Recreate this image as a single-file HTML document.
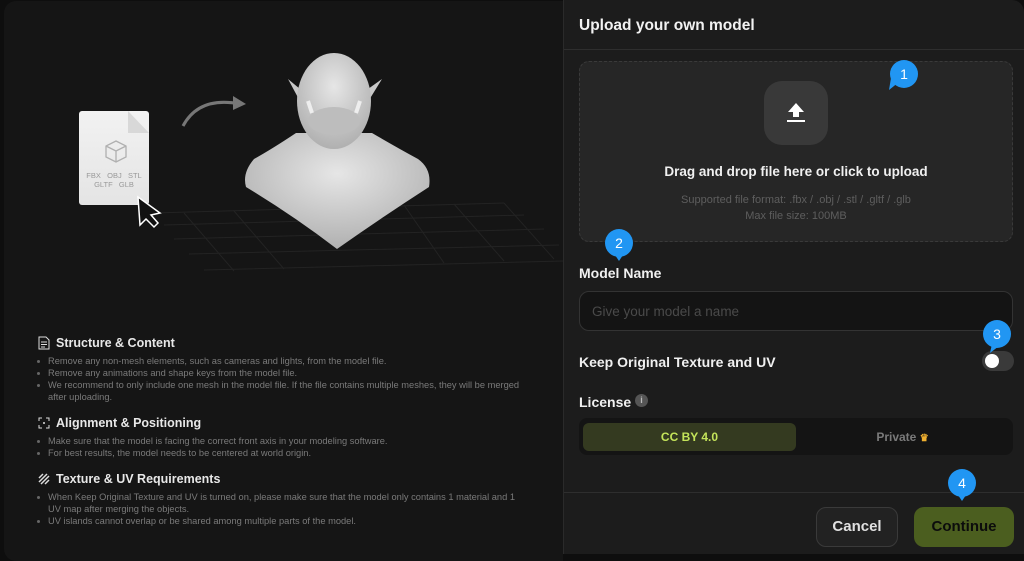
<!DOCTYPE html>
<html><head><meta charset="utf-8"><style>
*{margin:0;padding:0;box-sizing:border-box}
body{width:1024px;height:554px;background:#0e0e0e;font-family:"Liberation Sans",sans-serif;position:relative;overflow:hidden}
.left{position:absolute;left:4px;top:1px;width:559px;height:560px;background:#151515;border-radius:12px 0 0 12px}
.right{position:absolute;left:563px;top:0;width:461px;height:554px;background:#1c1c1c;border-left:1px solid #2a2a2a;border-radius:0 12px 0 0}
.abs{position:absolute}
h3{position:absolute;font-size:12.5px;color:#e8e8e8;font-weight:bold;left:52px}
ul{position:absolute;left:44px;width:480px;font-size:9.3px;line-height:12px;color:#7a7a7a;list-style:none}
ul li{position:relative}
ul li:before{content:"";position:absolute;left:-11px;top:5px;width:3px;height:3px;border-radius:50%;background:#666}
.badge{position:absolute;width:28px;height:28px;border-radius:50%;background:#2196f3;color:#fff;font-size:14px;text-align:center;line-height:28px}
.lbl{position:absolute;left:15px;font-size:14px;font-weight:bold;color:#f0f0f0}
</style></head><body>
<div class="left">
<svg class="abs" style="left:0;top:0" width="559" height="320">
<defs><radialGradient id="g" cx="50%" cy="35%" r="65%"><stop offset="0" stop-color="#e6e6e6"/><stop offset="1" stop-color="#b0b0b0"/></radialGradient>
<linearGradient id="f" x1="0" y1="0" x2="0" y2="1"><stop offset="0" stop-color="#f2f2f2"/><stop offset="1" stop-color="#e4e4e4"/></linearGradient></defs>
<g stroke="#232323" stroke-width="1" fill="none">
<path d="M150 212 L500 202 M160 224 L520 214 M170 238 L540 228 M185 253 L555 244 M200 269 L559 260"/>
<path d="M180 212 L230 270 M230 210 L280 268 M400 204 L440 262 M450 203 L500 260 M500 202 L550 258"/>
</g>
<rect x="75" y="110" width="70" height="94" rx="3" fill="url(#f)"/>
<path d="M124 110 L145 132 L124 132Z" fill="#d8d8d8"/>
<path d="M112 140 l10 5 v11 l-10 5 l-10 -5 v-11z M102 145 l10 5 l10 -5 M112 150 v11" stroke="#b0b0b0" fill="none" stroke-width="1.3"/>
<text x="110" y="177" font-size="7.5" fill="#999" text-anchor="middle" font-family="Liberation Sans" xml:space="preserve">FBX   OBJ   STL</text>
<text x="110" y="186" font-size="7.5" fill="#999" text-anchor="middle" font-family="Liberation Sans" xml:space="preserve">GLTF   GLB</text>
<path d="M134 196 L136 224 L142 218 L150 226 L154 222 L147 214 L156 212Z" fill="#111" stroke="#fff" stroke-width="1.5"/>
<path d="M179 125 Q195 95 236 103" stroke="#777" stroke-width="3" fill="none"/>
<path d="M229 95 L242 103 L229 109Z" fill="#777"/>
<path d="M292 132 Q268 148 250 158 Q238 172 242 186 Q290 215 333 248 Q380 215 425 186 Q428 168 414 158 Q392 146 368 132Z" fill="url(#g)"/>
<path d="M296 88 L284 78 L298 104Z M364 88 L378 78 L362 104Z" fill="#c8c8c8"/>
<ellipse cx="330" cy="100" rx="37" ry="48" fill="url(#g)"/>
<ellipse cx="330" cy="120" rx="26" ry="14" fill="#bdbdbd"/>
<path d="M308 112 l-4 -12 M352 112 l4 -12" stroke="#eee" stroke-width="4"/>
</svg>
<svg class="abs" style="left:34px;top:335px" width="12" height="14"><path d="M1 1h7l3 3v9H1z M3 6h6 M3 8.5h6 M3 11h4" stroke="#ddd" fill="none"/></svg>
<h3 style="top:335px">Structure &amp; Content</h3>
<ul style="top:354px"><li>Remove any non-mesh elements, such as cameras and lights, from the model file.</li><li>Remove any animations and shape keys from the model file.</li><li>We recommend to only include one mesh in the model file. If the file contains multiple meshes, they will be merged after uploading.</li></ul>
<svg class="abs" style="left:34px;top:416px" width="12" height="12"><path d="M1 4V1h3 M8 1h3v3 M11 8v3H8 M4 11H1V8" stroke="#ddd" fill="none"/><circle cx="6" cy="6" r="1" fill="#ddd"/></svg>
<h3 style="top:415px">Alignment &amp; Positioning</h3>
<ul style="top:434px"><li>Make sure that the model is facing the correct front axis in your modeling software.</li><li>For best results, the model needs to be centered at world origin.</li></ul>
<svg class="abs" style="left:34px;top:472px" width="12" height="12"><path d="M1 5L5 1 M1 9L9 1 M3 11L11 3 M7 11L11 7" stroke="#ddd" stroke-width="1.5"/></svg>
<h3 style="top:471px">Texture &amp; UV Requirements</h3>
<ul style="top:490px"><li>When Keep Original Texture and UV is turned on, please make sure that the model only contains 1 material and 1 UV map after merging the objects.</li><li>UV islands cannot overlap or be shared among multiple parts of the model.</li></ul>
</div>
<div class="right">
<div class="abs" style="left:15px;top:17px;font-size:15.5px;font-weight:bold;color:#f2f2f2">Upload your own model</div>
<div class="abs" style="left:0;top:49px;width:461px;height:1px;background:#2e2e2e"></div>
<div class="abs" style="left:15px;top:61px;width:434px;height:181px;background:#262626;border:1px dashed #3a3a3a;border-radius:10px"></div>
<div class="abs" style="left:200px;top:81px;width:64px;height:64px;background:#393939;border-radius:18px"></div>
<svg class="abs" style="left:222px;top:102px" width="20" height="22"><path d="M10 1L2 10h5v5h6v-5h5z" fill="#fff"/><rect x="1" y="18" width="18" height="2" fill="#fff"/></svg>
<div class="abs" style="left:15px;top:164px;width:434px;text-align:center;font-size:13.5px;font-weight:bold;color:#f0f0f0">Drag and drop file here or click to upload</div>
<div class="abs" style="left:15px;top:192px;width:434px;text-align:center;font-size:11px;line-height:16px;color:#5e5e5e">Supported file format: .fbx / .obj / .stl / .gltf / .glb<br>Max file size: 100MB</div>
<div class="lbl" style="top:265px">Model Name</div>
<div class="abs" style="left:15px;top:291px;width:434px;height:40px;background:#141414;border:1px solid #333;border-radius:10px;padding:12px 12px;font-size:13.5px;color:#4a4a4a">Give your model a name</div>
<div class="lbl" style="top:354px">Keep Original Texture and UV</div>
<div class="abs" style="left:418px;top:351px;width:32px;height:20px;background:#3a3a3a;border-radius:10px"><div style="position:absolute;left:3px;top:3px;width:14px;height:14px;border-radius:50%;background:#fff"></div></div>
<div class="lbl" style="top:394px">License</div>
<div class="abs" style="left:71px;top:394px;width:13px;height:13px;border-radius:50%;background:#555;color:#bbb;font-size:9px;text-align:center;line-height:13px;font-weight:bold">i</div>
<div class="abs" style="left:15px;top:418px;width:434px;height:37px;background:#141414;border-radius:8px"></div>
<div class="abs" style="left:19px;top:423px;width:213px;height:28px;background:#343a20;border-radius:6px;text-align:center;line-height:28px;font-size:12px;font-weight:bold;color:#c4e45a">CC BY 4.0</div>
<div class="abs" style="left:232px;top:423px;width:213px;height:28px;text-align:center;line-height:28px;font-size:12px;font-weight:bold;color:#7a7a7a">Private <span style="color:#f0b030;font-size:10px">♛</span></div>
<div class="abs" style="left:0;top:492px;width:461px;height:1px;background:#2e2e2e"></div>
<div class="abs" style="left:252px;top:507px;width:82px;height:40px;background:#222;border:1px solid #3a3a3a;border-radius:10px;text-align:center;line-height:38px;font-size:15px;font-weight:bold;color:#e0e0e0">Cancel</div>
<div class="abs" style="left:350px;top:507px;width:100px;height:40px;background:#4b5e1f;border-radius:10px;text-align:center;line-height:40px;font-size:15px;font-weight:bold;color:#0c0c0c">Continue</div>
</div>
<div class="badge" style="left:890px;top:60px">1</div><svg class="abs" style="left:889px;top:78px" width="12" height="14"><path d="M2 0L0 12L10 4Z" fill="#2196f3"/></svg>
<div class="badge" style="left:605px;top:229px">2</div><svg class="abs" style="left:613px;top:252px" width="12" height="10"><path d="M0 0L6 9L12 0Z" fill="#2196f3"/></svg>
<div class="badge" style="left:983px;top:320px">3</div><svg class="abs" style="left:990px;top:344px" width="10" height="10"><path d="M2 0L0 9L9 2Z" fill="#2196f3"/></svg>
<div class="badge" style="left:948px;top:469px">4</div><svg class="abs" style="left:956px;top:492px" width="12" height="10"><path d="M0 0L6 9L12 0Z" fill="#2196f3"/></svg>
</body></html>
